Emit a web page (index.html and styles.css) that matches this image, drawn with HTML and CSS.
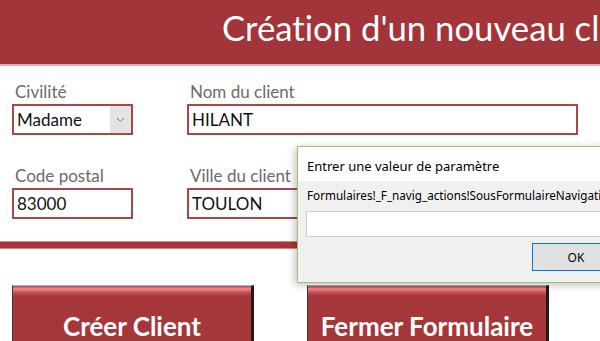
FILE: index.html
```html
<!DOCTYPE html>
<html lang="fr">
<head>
    <meta charset="UTF-8">
    <meta name="viewport" content="width=device-width, initial-scale=1.0">
    <title>Création d'un nouveau client</title>
    <link rel="stylesheet" href="styles.css">
</head>
<body>
    <div class="header">
        <h1>Création d'un nouveau client</h1>
    </div>

    <div class="form">
        <div class="row">
            <div class="field small">
                <label>Civilité</label>
                <div class="box select">
                    <span class="value">Madame</span>
                    <span class="arrow">
                        <svg width="9" height="6" viewBox="0 0 9 6"><path d="M1 1 L4.5 4.5 L8 1" fill="none" stroke="#7a7a7a" stroke-width="1"/></svg>
                    </span>
                </div>
            </div>
            <div class="field wide">
                <label>Nom du client</label>
                <div class="box"><span class="value">HILANT</span></div>
            </div>
        </div>
        <div class="row second">
            <div class="field small">
                <label>Code postal</label>
                <div class="box"><span class="value">83000</span></div>
            </div>
            <div class="field wide">
                <label>Ville du client</label>
                <div class="box"><span class="value">TOULON</span></div>
            </div>
        </div>
    </div>

    <div class="divider"></div>

    <div class="actions">
        <button class="big-btn">Créer Client</button>
        <button class="big-btn">Fermer Formulaire</button>
    </div>

    <!-- boîte de dialogue Access par-dessus le formulaire -->
    <div class="dialog">
        <div class="dialog-title">Entrer une valeur de paramètre</div>
        <div class="dialog-body">
            <p class="dialog-text">Formulaires!_F_navig_actions!SousFormulaireNavigation</p>
            <div class="dialog-input"></div>
            <div class="dialog-buttons">
                <button class="ok-btn">OK</button>
            </div>
        </div>
    </div>
</body>
</html>
```

FILE: styles.css
```css
body {
    margin: 0;
    width: 600px;
    height: 341px;
    overflow: hidden;
    background-color: #ffffff;
    font-family: Lato, "Open Sans", sans-serif;
    font-variant-ligatures: none;
    position: relative;
}
.header {
    height: 64px;
    background-color: #a1353a;
    border-bottom: 2px solid #e4a9aa;
    overflow: hidden;
}
.header h1 {
    margin: 0;
    padding-left: 222px;
    font-weight: normal;
    font-size: 34.7px;
    line-height: 56px;
    color: #ffffff;
    white-space: nowrap;
}
.form {
    padding: 16px 0 0 12px;
}
.row {
    display: flex;
    gap: 54px;
}
.row.second {
    margin-top: 31px;
}
.field label {
    display: block;
    padding-left: 3px;
    font-size: 17px;
    line-height: 19px;
    color: #6b6b6b;
    margin-bottom: 3px;
}
.field.small {
    width: 121px;
}
.field.wide {
    width: 391px;
}
.box {
    height: 27px;
    border: 2px solid #a8464a;
    display: flex;
    align-items: center;
    background-color: #ffffff;
}
.box .value {
    flex: 1;
    padding-left: 3px;
    font-size: 17px;
    line-height: 27px;
    color: #111111;
}
.select .arrow {
    width: 21px;
    height: 27px;
    background-color: #e3e3e3;
    display: flex;
    align-items: center;
    justify-content: center;
}
.divider {
    margin-top: 22px;
    height: 6px;
    background-color: #a5373b;
    border-top: 1px solid #c98a8c;
    border-bottom: 1px solid #c98a8c;
}
.actions {
    display: flex;
    gap: 53px;
    padding: 36px 0 0 12px;
}
.big-btn {
    width: 242px;
    height: 62px;
    padding: 19px 0 0 0;
    border: none;
    border-top: 1px solid #9fb2cc;
    border-left: 1px solid #4a3030;
    border-right: 3px solid #231818;
    background: linear-gradient(to bottom, #b9464b 0, #f08d90 3px, #c9555a 6px, #a5373b 10px, #a5373b 100%);
    color: #ffffff;
    font-family: Lato, "Open Sans", sans-serif;
    font-variant-ligatures: none;
    font-weight: bold;
    font-size: 26px;
    line-height: 40px;
    text-align: center;
    vertical-align: top;
}
.dialog {
    position: absolute;
    left: 297px;
    top: 146px;
    width: 330px;
    height: 135px;
    border: 1px solid #9cc66c;
    background-color: #f0f0f0;
    box-shadow: -2px 2px 8px rgba(0, 0, 0, 0.25);
    font-family: "Noto Sans", "Open Sans", sans-serif;
    color: #000000;
}
.dialog-title {
    height: 34px;
    background-color: #ffffff;
    padding-left: 9px;
    font-size: 13px;
    line-height: 30px;
    padding-top: 4px;
    box-sizing: border-box;
}
.dialog-body {
    padding: 0 0 0 8px;
}
.dialog-text {
    margin: 0;
    padding-left: 1px;
    font-size: 11.7px;
    line-height: 28px;
    white-space: nowrap;
}
.dialog-input {
    height: 24px;
    margin-top: 2px;
    background-color: #ffffff;
    border: 1px solid #d0d0d0;
}
.dialog-buttons {
    display: flex;
    padding: 6px 0 0 226px;
}
.ok-btn {
    width: 88px;
    height: 28px;
    border: 1px solid #0078d7;
    background-color: #e1e1e1;
    font-family: "Noto Sans", "Open Sans", sans-serif;
    font-size: 12px;
    color: #000000;
    padding: 0;
}
```
